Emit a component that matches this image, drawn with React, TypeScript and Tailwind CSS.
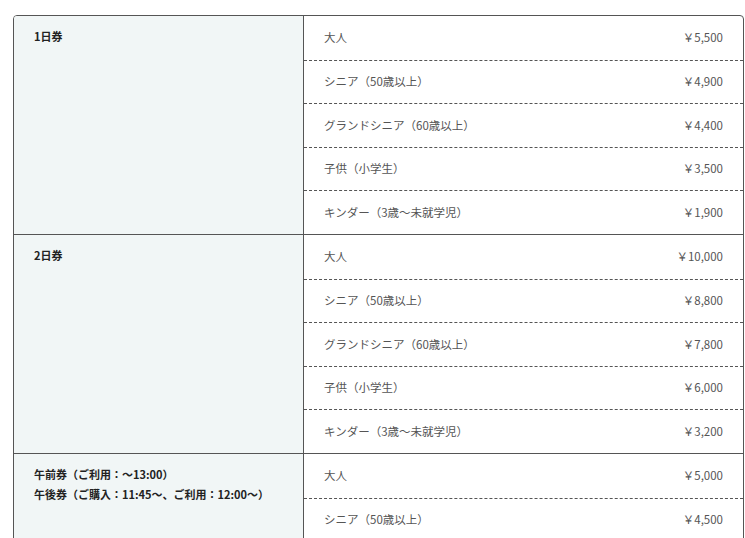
const groups = [
  {
    labels: ["1日券"],
    rows: [
      { name: "大人", price: "￥5,500" },
      { name: "シニア（50歳以上）", price: "￥4,900" },
      { name: "グランドシニア（60歳以上）", price: "￥4,400" },
      { name: "子供（小学生）", price: "￥3,500" },
      { name: "キンダー（3歳～未就学児）", price: "￥1,900" },
    ],
  },
  {
    labels: ["2日券"],
    rows: [
      { name: "大人", price: "￥10,000" },
      { name: "シニア（50歳以上）", price: "￥8,800" },
      { name: "グランドシニア（60歳以上）", price: "￥7,800" },
      { name: "子供（小学生）", price: "￥6,000" },
      { name: "キンダー（3歳～未就学児）", price: "￥3,200" },
    ],
  },
  {
    labels: ["午前券（ご利用：～13:00）", "午後券（ご購入：11:45～、ご利用：12:00～）"],
    rows: [
      { name: "大人", price: "￥5,000" },
      { name: "シニア（50歳以上）", price: "￥4,500" },
      { name: "グランドシニア（60歳以上）", price: "￥4,000" },
      { name: "子供（小学生）", price: "￥3,000" },
      { name: "キンダー（3歳～未就学児）", price: "￥1,500" },
    ],
  },
]

export default function App() {
  return (
    <div
      className="bg-white pt-[15px] pl-[13px] pr-[1px] h-[538px] overflow-hidden"
      style={{ fontFamily: '"Noto Sans CJK JP", "Noto Sans", sans-serif' }}
    >
      <div className="border border-[#555] rounded-[4px] overflow-hidden">
        {groups.map((g, gi) => (
          <div key={gi} className={"flex " + (gi > 0 ? "border-t border-[#555]" : "")}>
            <div className="w-[290px] shrink-0 bg-[#f1f6f6] border-r border-[#555] pl-5 pt-[10px] text-[11px] leading-[20px] font-bold text-[#222]">
              {g.labels.map((l) => (
                <div key={l}>{l}</div>
              ))}
            </div>
            <div className="flex-1">
              {g.rows.map((r, ri) => (
                <div
                  key={ri}
                  className={
                    "flex items-center justify-between px-5 h-[43.6px] text-[11.5px] text-[#555] " +
                    (ri > 0 ? "border-t border-dashed border-[#555]" : "")
                  }
                >
                  <span>{r.name}</span>
                  <span>{r.price}</span>
                </div>
              ))}
            </div>
          </div>
        ))}
      </div>
    </div>
  )
}
